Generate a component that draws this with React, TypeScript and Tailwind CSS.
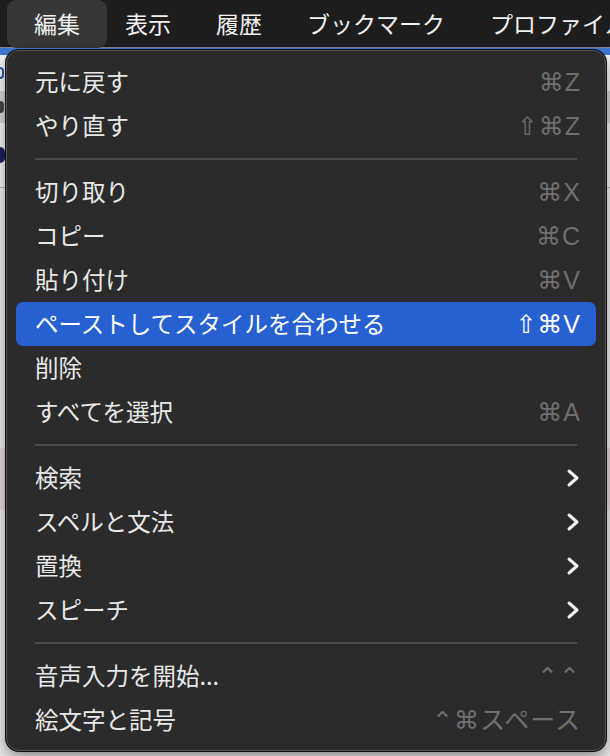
import React from 'react';

type Item =
  | { kind: 'sep' }
  | { kind: 'item'; label: string; shortcut?: string; submenu?: boolean; active?: boolean };

const items: Item[] = [
  { kind: 'item', label: '元に戻す', shortcut: '⌘Z' },
  { kind: 'item', label: 'やり直す', shortcut: '⇧⌘Z' },
  { kind: 'sep' },
  { kind: 'item', label: '切り取り', shortcut: '⌘X' },
  { kind: 'item', label: 'コピー', shortcut: '⌘C' },
  { kind: 'item', label: '貼り付け', shortcut: '⌘V' },
  { kind: 'item', label: 'ペーストしてスタイルを合わせる', shortcut: '⇧⌘V', active: true },
  { kind: 'item', label: '削除' },
  { kind: 'item', label: 'すべてを選択', shortcut: '⌘A' },
  { kind: 'sep' },
  { kind: 'item', label: '検索', submenu: true },
  { kind: 'item', label: 'スペルと文法', submenu: true },
  { kind: 'item', label: '置換', submenu: true },
  { kind: 'item', label: 'スピーチ', submenu: true },
  { kind: 'sep' },
  { kind: 'item', label: '音声入力を開始...', shortcut: '⌃⌃' },
  { kind: 'item', label: '絵文字と記号', shortcut: '⌃⌘スペース' },
];

const menus = ['編集', '表示', '履歴', 'ブックマーク', 'プロファイル'];

function Chevron() {
  return (
    <svg width="14" height="20" viewBox="0 0 14 20" className="mr-[1px]">
      <polyline points="3,3 11,10 3,17" fill="none" stroke="#f2f2f2" strokeWidth="3" strokeLinecap="round" strokeLinejoin="round" />
    </svg>
  );
}

export default function App() {
  return (
    <div
      className="relative w-[610px] h-[756px] overflow-hidden bg-[#e9e9e9] flex flex-col"
      style={{ fontFamily: '"Noto Sans CJK JP", "DejaVu Sans", sans-serif' }}
    >
      {/* Menu bar */}
      <div className="h-[48px] shrink-0 bg-[#1d1d1d] border-b border-[#7d8796] flex items-center pl-[7px] text-[23px] text-[#f1f1f1] whitespace-nowrap">
        {menus.map((m, i) => (
          <div
            key={m}
            className={`h-[48px] flex items-center px-[27px] -mr-[9px] rounded-[9px] ${i === 0 ? 'bg-[#373737] ' : ''}`}
          >
            {m}
          </div>
        ))}
      </div>

      {/* Page behind the menu */}
      <div className="flex-1 flex flex-col bg-[#f3f3f3]">
        <div className="h-[7px] bg-[#3d7ad6]" />
        <div className="h-[36px] bg-[#f7f7f7] flex items-center">
          <div className="w-[4px] h-[12px] rounded-r-full border-2 border-l-0 border-[#2c5bb5]" />
        </div>
        <div className="h-[32px] bg-[#d6d6d6] flex items-center">
          <div className="w-[4px] h-[12px] rounded-r-full bg-[#444]" />
        </div>
        <div className="h-[64px] bg-[#f5f5f5] flex items-center">
          <div className="w-[5px] h-[16px] rounded-r-full bg-[#1b1f5e]" />
        </div>
        <div className="h-[1px] bg-[#b8b8c8]" />
        <div className="h-[260px] bg-[#f0f0f0]" />
        <div className="h-[62px] bg-[#e6dcdc]" />
        <div className="flex-1 bg-[#ececec]" />
      </div>

      {/* Edit menu */}
      <div className="absolute left-[6px] top-[50px] w-[600px] h-[701px] rounded-[13px] bg-[#2b2b2b] border border-[#555] shadow-[0_0_0_1px_#111,0_6px_16px_rgba(0,0,0,0.45)] py-[9px] px-[9px]">
        {items.map((it, i) =>
          it.kind === 'sep' ? (
            <div key={i} className="h-[22px] flex items-center px-[19px]">
              <div className="h-[2px] w-full bg-[#4a4a4a]" />
            </div>
          ) : (
            <div
              key={i}
              className={`h-[44px] flex items-center justify-between pl-[19px] pr-[15px] rounded-[7px] ${
                it.active ? 'bg-[#2760d0] text-white' : 'text-[#e8e8e8]'
              }`}
            >
              <span className="text-[23.5px] leading-none">{it.label}</span>
              {it.shortcut && (
                <span
                  className={`text-[25px] leading-none tracking-[1px] ${it.active ? 'text-white' : 'text-[#6f6f6f]'}`}
                  style={{ fontFamily: '"Liberation Sans", "DejaVu Sans", "Noto Sans CJK JP", sans-serif' }}
                >
                  {it.shortcut}
                </span>
              )}
              {it.submenu && <Chevron />}
            </div>
          )
        )}
      </div>
    </div>
  );
}
